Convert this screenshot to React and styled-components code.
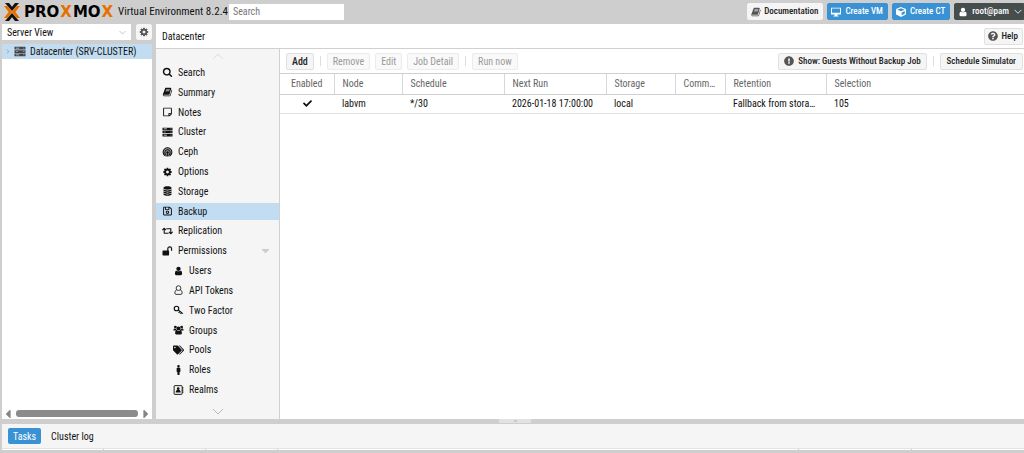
import React from "react";
import styled, { createGlobalStyle, css } from "styled-components";
import {
  FaRegStickyNote,
  FaRegSave,
  FaRetweet,
  FaUsers,
  FaTags,
  FaMale,
  FaCheck,
  FaCube,
  FaQuestionCircle,
  FaExclamationCircle,
  FaChevronUp,
  FaChevronRight,
  FaCaretDown,
  FaCaretLeft,
  FaCaretRight,
} from "react-icons/fa";

const GlobalStyle = createGlobalStyle`
  *, *::before, *::after { box-sizing: border-box; }
  body { margin: 0; background: #cecece; }
  body, button, input, select, table {
    font-family: "Roboto Condensed", "Liberation Sans", Arial, sans-serif;
    font-size: 10px;
    line-height: 13px;
    color: #111;
  }
`;

/* ---------- icons ---------- */

const Svg = styled.svg`
  width: 1em;
  height: 1em;
  flex: none;
  fill: currentColor;
`;

const glyph = (d) => () => (
  <Svg viewBox="0 0 1792 1792" aria-hidden="true">
    <path d={d} />
  </Svg>
);

const SearchIcon = glyph(
  "M1216 832q0-185-131.5-316.5t-316.5-131.5-316.5 131.5-131.5 316.5 131.5 316.5 316.5 131.5 316.5-131.5 131.5-316.5zm512 832q0 52-38 90t-90 38q-54 0-90-38l-343-342q-179 124-399 124-143 0-273.5-55.5t-225-150-150-225-55.5-273.5 55.5-273.5 150-225 225-150 273.5-55.5 273.5 55.5 225 150 150 225 55.5 273.5q0 220-124 399l343 343q37 37 37 90z"
);
const BookIcon = glyph(
  "M1703 478q40 57 18 129l-275 906q-19 64-76.5 107.5t-122.5 43.5h-923q-77 0-148.5-53.5t-99.5-131.5q-24-67-2-127 0-4 3-27t4-37q1-8-3-21.5t-3-19.5q2-11 8-21t16.5-23.5 16.5-23.5q23-38 45-91.5t30-91.5q3-10 .5-30t-.5-28q3-11 17-28t17-23q21-36 42-92t25-90q1-9-2.5-32t.5-28q4-13 22-30.5t22-22.5q19-26 42.5-84.5t27.5-96.5q1-8-3-25.5t-2-26.5q2-8 9-18t18-23 17-21q8-12 16.5-30.5t15-35 16-36 19.5-32 26.5-23.5 36-11.5 47.5 5.5l-1 3q38-9 51-9h761q74 0 114 56t18 130l-274 906q-36 119-71.5 153.5t-128.5 34.5h-869q-27 0-38 15-11 16-1 43 24 70 144 70h923q29 0 56-15.5t35-41.5l300-987q7-22 5-57 38 15 59 43zm-1064 2q-4 13 2 22.5t20 9.5h608q13 0 25.5-9.5t16.5-22.5l21-64q4-13-2-22.5t-20-9.5h-608q-13 0-25.5 9.5t-16.5 22.5zm-83 256q-4 13 2 22.5t20 9.5h608q13 0 25.5-9.5t16.5-22.5l21-64q4-13-2-22.5t-20-9.5h-608q-13 0-25.5 9.5t-16.5 22.5z"
);
const UserIcon = glyph(
  "M1536 1399q0 109-62.5 187t-150.5 78h-854q-88 0-150.5-78t-62.5-187q0-85 8.5-160.5t31.5-152 58.5-131 94-89 134.5-34.5q131 128 313 128t313-128q76 0 134.5 34.5t94 89 58.5 131 31.5 152 8.5 160.5zm-256-887q0 159-112.5 271.5t-271.5 112.5-271.5-112.5-112.5-271.5 112.5-271.5 271.5-112.5 271.5 112.5 112.5 271.5z"
);
const CogIcon = glyph(
  "M1152 896q0-106-75-181t-181-75-181 75-75 181 75 181 181 75 181-75 75-181zm512-109v222q0 12-8 23t-20 13l-185 28q-19 54-39 91 35 50 107 138 10 12 10 25t-9 23q-27 37-99 108t-94 71q-12 0-26-9l-138-108q-44 23-91 38-16 136-29 186-7 28-36 28h-222q-14 0-24.5-8.5t-11.5-21.5l-28-184q-49-16-90-37l-141 107q-10 9-25 9-14 0-25-11-126-114-165-168-7-10-7-23 0-12 8-23 15-21 51-66.5t54-70.5q-27-50-41-99l-183-27q-13-2-21-12.5t-8-23.5v-222q0-12 8-23t19-13l186-28q14-46 39-92-40-57-107-138-10-12-10-24 0-10 9-23 26-36 98.5-107.5t94.5-71.5q13 0 26 10l138 107q44-23 91-38 16-136 29-186 7-28 36-28h222q14 0 24.5 8.5t11.5 21.5l28 184q49 16 90 37l142-107q9-9 24-9 13 0 25 10 129 119 165 170 7 8 7 22 0 12-8 23-15 21-51 66.5t-54 70.5q26 50 41 98l183 28q13 2 21 12.5t8 23.5z"
);

const UserOutlineIcon = () => (
  <Svg viewBox="0 0 16 16" aria-hidden="true">
    <g fill="none" stroke="currentColor" strokeWidth="1.3">
      <circle cx="8" cy="5" r="3.8" />
      <path d="M5 7.6C3 8.6 2.2 10.6 2.2 13c0 1.2.8 2 1.800 2h8c1 0 1.800-.8 1.800-2 0-2.400-.8-4.400-2.800-5.400" />
    </g>
  </Svg>
);
const ServerIcon = () => (
  <Svg viewBox="0 0 16 16" aria-hidden="true">
    <path
      fillRule="evenodd"
      d="M0 1h16v4H0zM2 2.500v1h5v-1zM13 2.400v1.200h1.200V2.400zM0 6h16v4H0zM2 7.500v1h3v-1zM13 7.400v1.200h1.200V7.400zM0 11h16v4H0zM2 12.500v1h5v-1zM13 12.400v1.200h1.200v-1.200z"
    />
  </Svg>
);
const DatabaseIcon = () => (
  <Svg viewBox="0 0 16 16" aria-hidden="true">
    <path d="M1.500 2.800C1.500 1.200 4.400.300 8 .300s6.500.9 6.500 2.500v.9C14.500 5.200 11.600 6 8 6s-6.500-.8-6.500-2.300zM1.500 5.200C3 6.500 5.300 7 8 7s5-.5 6.500-1.800v1.600C14.500 8.300 11.600 9.200 8 9.200s-6.500-.9-6.500-2.400zM1.500 8.400c1.500 1.300 3.800 1.800 6.500 1.800s5-.5 6.500-1.800V10c0 1.500-2.900 2.400-6.500 2.400S1.500 11.500 1.500 10zM1.500 11.600c1.500 1.300 3.800 1.800 6.500 1.800s5-.5 6.500-1.800v1.700c0 1.500-2.900 2.400-6.500 2.400s-6.500-.9-6.500-2.400z" />
  </Svg>
);
const CephIcon = () => (
  <Svg viewBox="0 0 16 16" aria-hidden="true">
    <circle cx="8" cy="7.500" r="7" opacity="0.350" />
    <g fill="none" stroke="currentColor" strokeWidth="1.700">
      <path d="M4 14A7 7 0 1 1 12 14" />
      <path d="M5.600 12.400A4.300 4.300 0 1 1 10.400 12.400V15M5.600 12.400V15" />
    </g>
    <circle cx="8" cy="8.600" r="2" />
    <path d="M7.300 10h1.400v5H7.300z" />
  </Svg>
);
const UnlockIcon = () => (
  <Svg viewBox="0 0 16 16" aria-hidden="true">
    <rect x="0" y="7" width="10.500" height="8" rx="1" />
    <path d="M8.500 8V4.500a3 3 0 0 1 6 0v3" fill="none" stroke="currentColor" strokeWidth="1.900" />
  </Svg>
);
const KeyIcon = () => (
  <Svg viewBox="0 0 16 16" aria-hidden="true">
    <circle cx="4.800" cy="5.600" r="3.600" fill="none" stroke="currentColor" strokeWidth="1.900" />
    <path d="M7.400 7.800l7.600 6M10 10.500l-1.800 2.300M12.800 12.200l-1.600 2" fill="none" stroke="currentColor" strokeWidth="1.900" />
  </Svg>
);
const GroupIcon = () => (
  <Svg viewBox="0 0 16 16" aria-hidden="true">
    <circle cx="3" cy="3.200" r="2.200" />
    <circle cx="13" cy="3.200" r="2.200" />
    <circle cx="8" cy="5.600" r="3.200" />
    <path d="M0 8.500C0 6.500.6 5.600 1.600 5.600c1 .8 2 .7 2.800.3 0 1.300.5 2.300 1.200 3H1.200C.5 9.300 0 9 0 8.500zM16 8.500c0-2-.6-2.900-1.600-2.900-1 .8-2 .7-2.800.3 0 1.300-.5 2.300-1.200 3h4.400c.7.400 1.200.1 1.200-.4zM2.600 13.200c0-2.700.8-4.700 2.800-4.700 1.600 1.300 3.600 1.300 5.200 0 2 0 2.800 2 2.800 4.700 0 1.200-.8 1.900-1.900 1.900h-7c-1.100 0-1.900-.7-1.900-1.900z" />
  </Svg>
);
const AddressBookIcon = () => (
  <Svg viewBox="0 0 16 16" aria-hidden="true">
    <rect x="1" y="1" width="12.800" height="14" rx="1" fill="none" stroke="currentColor" strokeWidth="1.500" />
    <circle cx="7.500" cy="5.800" r="2.200" />
    <path d="M3.600 12c0-2.800 1-4.400 3.900-4.400s3.900 1.600 3.900 4.400zM14 3.500h1.800v2H14zM14 7h1.800v2H14zM14 10.500h1.800v2H14z" />
  </Svg>
);
const DesktopIcon = () => (
  <Svg viewBox="0 0 16 16" aria-hidden="true">
    <path fillRule="evenodd" d="M0 1h16v11H10l.5 1.800H12V15H4v-1.200h1.500L6 12H0zM1.500 2.500v6.800h13V2.500z" />
  </Svg>
);

/* ---------- page frame ---------- */

const Page = styled.div`
  display: flex;
  flex-direction: column;
  height: 100vh;
  min-height: 440px;
  overflow: hidden;
`;

const Header = styled.header`
  display: flex;
  align-items: center;
  height: 24px;
  flex: none;
  padding-left: 4px;
  padding-bottom: 1px;
`;

const Logo = styled.div`
  display: flex;
  align-items: center;
  gap: 4px;
  width: 112px;
  svg {
    width: 16px;
    height: 18px;
    flex: none;
  }
`;

const Wordmark = styled.span`
  font: bold 15px/18px "DejaVu Sans", sans-serif;
  color: #000;
  b {
    padding: 0 1px;
    color: #e57000;
  }
`;

const Version = styled.span`
  font-size: 11px;
  line-height: 16px;
  margin-left: 2px;
  width: 111px;
  white-space: nowrap;
`;

const SearchInput = styled.input`
  width: 115px;
  height: 16px;
  padding: 0 4px;
  border: 0;
  background: #fff;
  &::placeholder {
    color: #777;
    opacity: 1;
  }
`;

const HeaderActions = styled.div`
  display: flex;
  gap: 4px;
  margin-left: auto;
`;

const tones = {
  plain: css`
    background: #f5f5f5;
    border-color: #e0e0e0;
    color: #222;
  `,
  head: css`
    background: #f5f5f5;
    border-color: #f5f5f5;
    color: #222;
  `,
  primary: css`
    background: #3892d4;
    border-color: #3892d4;
    color: #fff;
  `,
  dark: css`
    background: #464d4d;
    border-color: #464d4d;
    color: #fff;
    border-radius: 2px 0 0 2px;
  `,
};

const Button = styled.button`
  display: inline-flex;
  align-items: center;
  justify-content: center;
  gap: ${(p) => p.$gap || 4}px;
  flex: none;
  height: 17px;
  padding: 0 5px;
  border: 1px solid;
  border-radius: 2px;
  font-size: ${(p) => (p.$small ? 9 : 10)}px;
  line-height: 13px;
  font-weight: 500;
  white-space: nowrap;
  ${(p) => tones[p.$tone || "plain"]}
  svg {
    width: 10px;
    height: 10px;
    color: ${(p) => (p.$tone === "primary" || p.$tone === "dark" ? "#fff" : "#555")};
  }
  &:disabled {
    color: #999;
    background: #f9f9f9;
    border-color: #ececec;
    font-weight: 400;
  }
`;

const HeaderButton = styled(Button)`
  padding: 0 ${(p) => (p.$tone === "dark" ? 0 : 4)}px 0 3px;
`;

const WideButton = styled(Button)`
  padding: 0 6px;
`;

const IconButton = styled(Button)`
  width: 16px;
  height: 16px;
  padding: 0;
`;

const Body = styled.div`
  display: flex;
  flex: 1;
  gap: 4px;
  min-height: 0;
  padding-left: 2px;
`;

/* ---------- resource tree ---------- */

const Side = styled.aside`
  display: flex;
  flex-direction: column;
  gap: 4px;
  width: 150px;
  flex: none;
`;

const ViewBar = styled.div`
  display: flex;
  justify-content: space-between;
`;

const SelectBox = styled.label`
  display: flex;
  align-items: center;
  width: 129px;
  height: 16px;
  padding: 0 5px;
  background: #fff;
  svg {
    width: 7px;
    height: 7px;
    color: #bbb;
  }
  select {
    flex: 1;
    appearance: none;
    border: 0;
    padding: 0;
    background: transparent;
  }
`;

const Tree = styled.div`
  display: flex;
  flex-direction: column;
  flex: 1;
  background: #fff;
`;

const TreeRow = styled.a`
  display: flex;
  align-items: center;
  gap: 4px;
  height: 15px;
  padding-left: 4px;
  background: #c2ddf2;
  color: #111;
  text-decoration: none;
  white-space: nowrap;
  svg {
    width: 12px;
    height: 11px;
    color: #444;
  }
  svg:first-child {
    width: 4px;
    height: 5px;
    color: #aaa;
  }
`;

const ScrollBar = styled.div`
  display: flex;
  align-items: center;
  justify-content: space-between;
  gap: 4px;
  height: 11px;
  margin-top: auto;
  padding: 0 2px;
  color: #858585;
  svg {
    width: 8px;
    height: 14px;
  }
`;

const Thumb = styled.div`
  flex: 1;
  height: 7px;
  border-radius: 3px;
  background: #8b8b8b;
`;

/* ---------- datacenter panel ---------- */

const Main = styled.main`
  display: flex;
  flex-direction: column;
  flex: 1;
  min-width: 0;
  background: #fff;
`;

const TitleBar = styled.div`
  display: flex;
  align-items: center;
  justify-content: space-between;
  height: 25px;
  padding: 0 1px 0 6px;
  border-bottom: 1px solid #d0d0d0;
`;

const Title = styled.h1`
  margin: 0;
  font-size: 10px;
  font-weight: 400;
`;

const Columns = styled.div`
  display: flex;
  flex: 1;
  min-height: 0;
`;

const Nav = styled.nav`
  display: flex;
  flex-direction: column;
  width: 124px;
  flex: none;
  background: #f5f5f5;
  border-right: 1px solid #d0d0d0;
`;

const Scroller = styled.button`
  display: flex;
  justify-content: center;
  align-items: center;
  height: ${(p) => (p.$end ? 21 : 15)}px;
  padding: ${(p) => (p.$end ? "6px 0 0" : "0")};
  border: 0;
  background: none;
  color: ${(p) => (p.$end ? "#bbb" : "#ddd")};
`;

const Thin = styled.svg`
  width: 12px;
  height: 7px;
  fill: none;
  stroke: currentColor;
`;

const NavList = styled.ul`
  display: grid;
  flex: 1;
  grid-auto-rows: 1fr;
  row-gap: 3px;
  margin: 0;
  padding: 0;
  list-style: none;
`;

const NavLink = styled.a`
  display: flex;
  align-items: center;
  gap: 5px;
  height: 100%;
  padding-left: ${(p) => (p.$nested ? 17 : 6)}px;
  padding-right: 8px;
  color: #111;
  text-decoration: none;
  background: ${(p) => (p.$active ? "#c2ddf2" : "transparent")};
  svg {
    width: 11px;
    height: 10px;
    flex: none;
  }
  svg:last-of-type:not(:first-of-type) {
    margin-left: auto;
    height: 13px;
    color: #ccc;
  }
`;

const Content = styled.section`
  flex: 1;
  min-width: 0;
`;

const Toolbar = styled.div`
  display: flex;
  align-items: center;
  gap: 5px;
  height: 25px;
  padding: 0 1px 0 6px;
  border-bottom: 1px solid #d0d0d0;
`;

const Divider = styled.i`
  width: 1px;
  height: 10px;
  margin: 0 1px;
  background: #ddd;
`;

const Spacer = styled.span`
  flex: 1;
`;

const Grid = styled.table`
  width: 100%;
  table-layout: fixed;
  border-collapse: collapse;
  th,
  td {
    height: 20px;
    padding: 0 4px 0 8px;
    white-space: nowrap;
    text-align: left;
    font-weight: 400;
    border-bottom: 1px solid #d0d0d0;
  }
  td {
    height: 19px;
    border-bottom-color: #e2e2e2;
  }
  th {
    color: #666;
  }
  th + th {
    border-left: 1px solid #d8d8d8;
  }
  th:first-child,
  td:first-child {
    padding: 0;
    text-align: center;
  }
  svg {
    display: block;
    margin: 0 auto;
  }
`;

/* ---------- log panel ---------- */

const Splitter = styled.div`
  display: flex;
  justify-content: center;
  height: 5px;
  flex: none;
  padding-left: 6px;
  button {
    display: flex;
    align-items: center;
    justify-content: center;
    width: 32px;
    height: 4px;
    padding: 0;
    border: 0;
    background: #e2e2e2;
    color: #aaa;
  }
  svg {
    width: 5px;
    height: 4px;
  }
`;

const Logs = styled.footer`
  flex: none;
  margin-left: 2px;
  margin-bottom: 3px;
  background: #f5f5f5;
`;

const Tabs = styled.div`
  display: flex;
  align-items: center;
  gap: 5px;
  height: 24px;
  padding-left: 6px;
`;

const Tab = styled.button`
  height: 16px;
  padding: 0 5px;
  border: 0;
  border-radius: 2px;
  background: ${(p) => (p.$active ? "#3892d4" : "transparent")};
  color: ${(p) => (p.$active ? "#fff" : "#111")};
`;

const LogEdge = styled.div`
  display: flex;
  height: 2px;
  background: #fff;
  border-top: 1px solid #e2e2e2;
  span {
    border-right: 1px solid #ccc;
  }
`;

const navItems = [
  { label: "Search", Icon: SearchIcon },
  { label: "Summary", Icon: BookIcon },
  { label: "Notes", Icon: FaRegStickyNote },
  { label: "Cluster", Icon: ServerIcon },
  { label: "Ceph", Icon: CephIcon },
  { label: "Options", Icon: CogIcon },
  { label: "Storage", Icon: DatabaseIcon },
  { label: "Backup", Icon: FaRegSave, active: true },
  { label: "Replication", Icon: FaRetweet },
  { label: "Permissions", Icon: UnlockIcon, group: true },
  { label: "Users", Icon: UserIcon, nested: true },
  { label: "API Tokens", Icon: UserOutlineIcon, nested: true },
  { label: "Two Factor", Icon: KeyIcon, nested: true },
  { label: "Groups", Icon: GroupIcon, nested: true },
  { label: "Pools", Icon: FaTags, nested: true },
  { label: "Roles", Icon: FaMale, nested: true },
  { label: "Realms", Icon: AddressBookIcon, nested: true },
];

const columns = [
  { label: "Enabled", width: 54 },
  { label: "Node", width: 68 },
  { label: "Schedule", width: 102 },
  { label: "Next Run", width: 102 },
  { label: "Storage", width: 69 },
  { label: "Comm…", width: 50 },
  { label: "Retention", width: 101 },
  { label: "Selection" },
];

const jobs = [
  ["labvm", "*/30", "2026-01-18 17:00:00", "local", "", "Fallback from stora…", "105"],
];

export default function App() {
  return (
    <Page>
      <GlobalStyle />
      <Header>
        <Logo>
          <svg viewBox="0 0 16 18" aria-hidden="true">
            <path d="M1 0h4L8 3.800 11 0h4L8 8zM1 18h4l3-3.800 3 3.800h4L8 10z" fill="#111" />
            <path d="M0 3h3.500l5 6-5 6H0l4.600-6zM16 3h-3.500l-5 6 5 6H16l-4.600-6z" fill="#e57000" />
          </svg>
          <Wordmark>
            PRO<b>X</b>MO<b>X</b>
          </Wordmark>
        </Logo>
        <Version>Virtual Environment 8.2.4</Version>
        <SearchInput type="text" placeholder="Search" aria-label="Search" />
        <HeaderActions>
          <HeaderButton $small $tone="head" $gap={3}>
            <BookIcon />
            Documentation
          </HeaderButton>
          <HeaderButton $small $tone="primary">
            <DesktopIcon />
            Create VM
          </HeaderButton>
          <HeaderButton $small $tone="primary">
            <FaCube />
            Create CT
          </HeaderButton>
          <HeaderButton $small $tone="dark">
            <UserIcon />
            root@pam
            <Thin viewBox="0 0 12 7">
              <path d="M2 1l4 4 4-4" />
            </Thin>
          </HeaderButton>
        </HeaderActions>
      </Header>

      <Body>
        <Side>
          <ViewBar>
            <SelectBox>
              <select aria-label="View" defaultValue="server">
                <option value="server">Server View</option>
              </select>
              <Thin viewBox="0 0 12 7">
                <path d="M1 1l5 5 5-5" strokeWidth="1.500" />
              </Thin>
            </SelectBox>
            <IconButton $tone="head" aria-label="Settings">
              <CogIcon />
            </IconButton>
          </ViewBar>
          <Tree>
            <TreeRow href="#datacenter">
              <FaChevronRight />
              <ServerIcon />
              <span>Datacenter (SRV-CLUSTER)</span>
            </TreeRow>
            <ScrollBar>
              <FaCaretLeft />
              <Thumb />
              <FaCaretRight />
            </ScrollBar>
          </Tree>
        </Side>

        <Main>
          <TitleBar>
            <Title>Datacenter</Title>
            <HeaderButton $small>
              <FaQuestionCircle />
              Help
            </HeaderButton>
          </TitleBar>
          <Columns>
            <Nav>
              <Scroller aria-label="Scroll up">
                <Thin viewBox="0 0 12 7">
                  <path d="M1 6l5-5 5 5" />
                </Thin>
              </Scroller>
              <NavList>
                {navItems.map(({ label, Icon, active, nested, group }) => (
                  <li key={label}>
                    <NavLink href={"#" + label} $active={active} $nested={nested}>
                      <Icon />
                      {label}
                      {group && <FaCaretDown />}
                    </NavLink>
                  </li>
                ))}
              </NavList>
              <Scroller $end aria-label="Scroll down">
                <Thin viewBox="0 0 12 7">
                  <path d="M1 1l5 5 5-5" />
                </Thin>
              </Scroller>
            </Nav>

            <Content>
              <Toolbar>
                <Button>Add</Button>
                <Divider />
                <Button disabled>Remove</Button>
                <Button disabled>Edit</Button>
                <Button disabled>Job Detail</Button>
                <Divider />
                <Button disabled>Run now</Button>
                <Spacer />
                <Button $small>
                  <FaExclamationCircle />
                  Show: Guests Without Backup Job
                </Button>
                <Divider />
                <WideButton $small>Schedule Simulator</WideButton>
              </Toolbar>
              <Grid>
                <colgroup>
                  {columns.map((c) => (
                    <col key={c.label} width={c.width} />
                  ))}
                </colgroup>
                <thead>
                  <tr>
                    {columns.map((c) => (
                      <th key={c.label} scope="col">
                        {c.label}
                      </th>
                    ))}
                  </tr>
                </thead>
                <tbody>
                  {jobs.map((job) => (
                    <tr key={job[0]}>
                      <td>
                        <FaCheck size={9} aria-label="Enabled" />
                      </td>
                      {job.map((value, i) => (
                        <td key={i}>{value}</td>
                      ))}
                    </tr>
                  ))}
                </tbody>
              </Grid>
            </Content>
          </Columns>
        </Main>
      </Body>

      <Splitter>
        <button aria-label="Collapse log panel">
          <FaChevronUp />
        </button>
      </Splitter>
      <Logs>
        <Tabs>
          <Tab $active>Tasks</Tab>
          <Tab>Cluster log</Tab>
        </Tabs>
        <LogEdge>
          <span style={{ width: "10%" }} />
          <span style={{ width: "10%" }} />
          <span style={{ width: "7%" }} />
          <span style={{ width: "51%" }} />
          <span style={{ width: "11%" }} />
        </LogEdge>
      </Logs>
    </Page>
  );
}
